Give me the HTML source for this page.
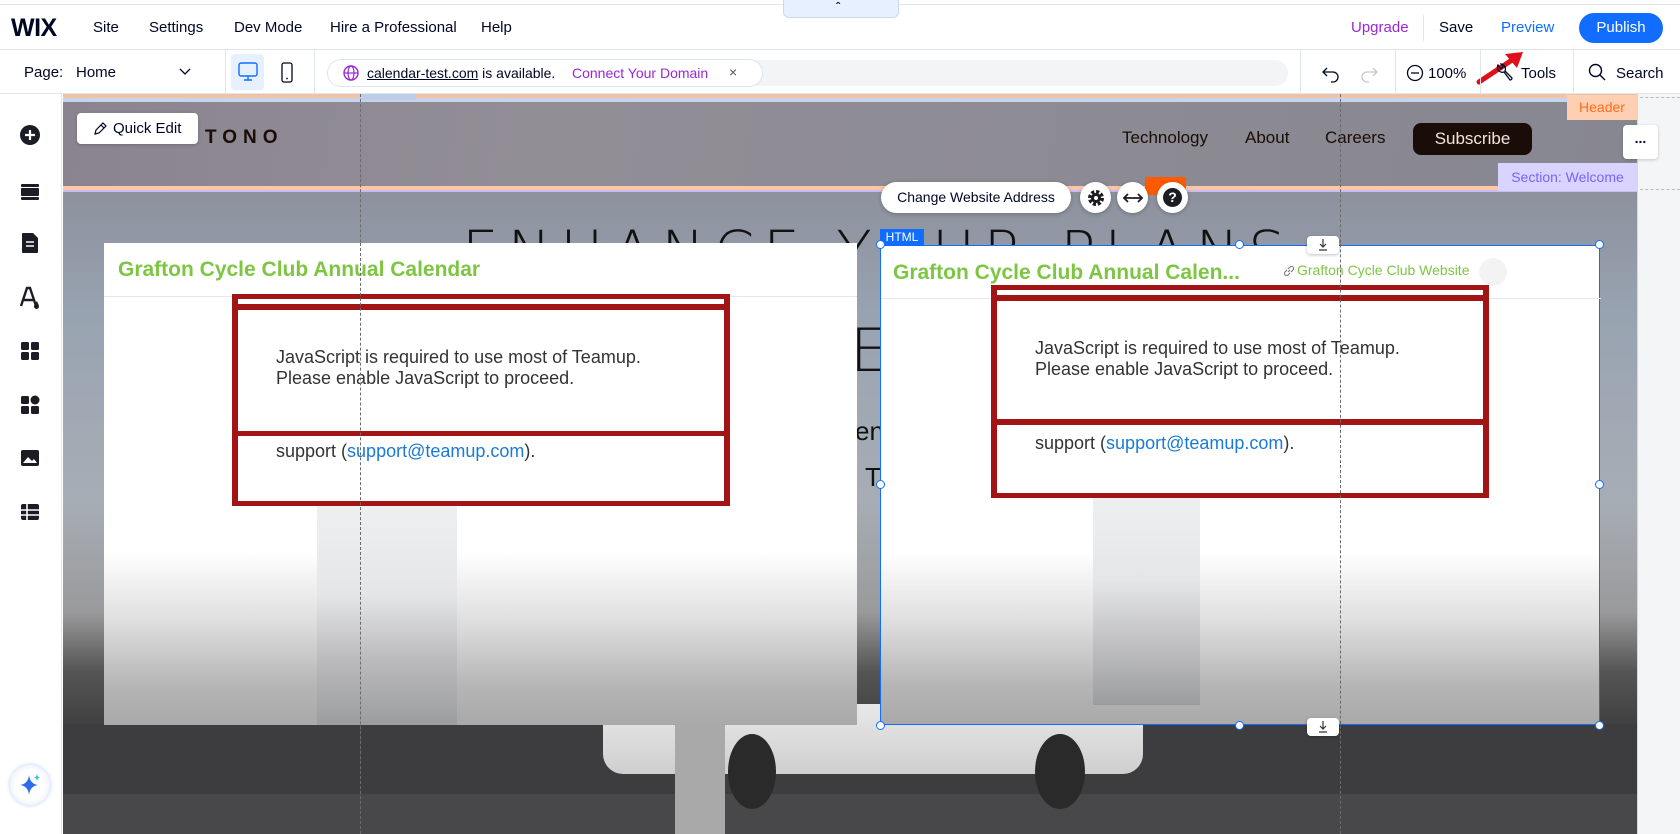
<!DOCTYPE html>
<html><head><meta charset="utf-8"><style>
*{box-sizing:border-box;margin:0;padding:0}
body{width:1680px;height:834px;overflow:hidden;font-family:"Liberation Sans",Arial,sans-serif;background:#fff;position:relative;color:#000624}
.a{position:absolute}
.t{position:absolute;white-space:nowrap}
.sep{position:absolute;width:1px;background:#dfe5eb}
.dash{position:absolute;width:0;border-left:1.5px dashed #6b6b6b}
.jt{font-family:"Liberation Sans",Arial,sans-serif;font-size:18px;color:#333;line-height:21px}
.rb{position:absolute;background:#a31515}
.hd{position:absolute;width:9px;height:9px;border:1.5px solid #116dff;background:#fff;border-radius:50%}
</style></head><body>
<!-- top bar -->
<div class="a" style="left:0;top:4px;width:1680px;height:1px;background:#dfe5eb"></div>
<div class="a" style="left:783px;top:0;width:116px;height:18px;background:#e7f0ff;border:1px solid #c9d8ee;border-top:none;border-radius:0 0 6px 6px"></div>
<div class="t" style="left:836px;top:0;font-size:12px;font-weight:bold">ˆ</div>
<div class="t" style="left:11px;top:14px;font-size:25px;font-weight:bold;letter-spacing:-0.5px">WIX</div>
<div class="t" style="left:93px;top:19px;font-size:15px">Site</div>
<div class="t" style="left:149px;top:19px;font-size:15px">Settings</div>
<div class="t" style="left:234px;top:19px;font-size:15px">Dev Mode</div>
<div class="t" style="left:330px;top:19px;font-size:15px">Hire a Professional</div>
<div class="t" style="left:481px;top:19px;font-size:15px">Help</div>
<div class="t" style="left:1351px;top:19px;font-size:15px;color:#9a27d5">Upgrade</div>
<div class="sep" style="left:1423px;top:15px;height:26px"></div>
<div class="t" style="left:1439px;top:19px;font-size:15px">Save</div>
<div class="t" style="left:1501px;top:19px;font-size:15px;color:#116dff">Preview</div>
<div class="a" style="left:1579px;top:13px;width:84px;height:30px;background:#116dff;border-radius:15px;color:#fff;font-size:15px;text-align:center;line-height:30px">Publish</div>
<div class="a" style="left:0;top:49px;width:1680px;height:1px;background:#dfe5eb"></div>
<!-- red arrow -->
<svg class="a" style="left:1475px;top:50px" width="60" height="36"><path d="M4 32 L40 8" stroke="#e0101a" stroke-width="5" stroke-linecap="round"/><path d="M30 4 L48 2 L42 18 Z" fill="#e0101a"/></svg>
<!-- second bar -->
<div class="t" style="left:24px;top:64px;font-size:15px">Page:</div>
<div class="t" style="left:76px;top:64px;font-size:15px">Home</div>
<svg class="a" style="left:179px;top:68px" width="12" height="8"><path d="M1 1l5 5 5-5" stroke="#000624" fill="none" stroke-width="1.3"/></svg>
<div class="sep" style="left:225px;top:50px;height:44px"></div>
<div class="a" style="left:231px;top:54px;width:33px;height:36px;background:#e7f0ff;border-radius:4px"></div>
<svg class="a" style="left:237px;top:62px" width="22" height="20"><rect x="2" y="1" width="18" height="13" rx="2" stroke="#116dff" fill="none" stroke-width="1.4"/><path d="M11 14v4M7 18h8" stroke="#116dff" stroke-width="1.4"/></svg>
<svg class="a" style="left:280px;top:62px" width="14" height="22"><rect x="2" y="1" width="10" height="19" rx="2" stroke="#000624" fill="none" stroke-width="1.3"/><circle cx="7" cy="16.5" r="0.9" fill="#000624"/></svg>
<div class="sep" style="left:314px;top:50px;height:44px"></div>
<div class="a" style="left:700px;top:60px;width:588px;height:26px;background:#f3f4f5;border-radius:13px"></div>
<div class="a" style="left:327px;top:59px;width:436px;height:28px;background:#fff;border:1px solid #dfe5eb;border-radius:14px"></div>
<svg class="a" style="left:342px;top:64px" width="18" height="18"><circle cx="9" cy="9" r="7" stroke="#9a27d5" fill="none" stroke-width="1.4"/><ellipse cx="9" cy="9" rx="3" ry="7" stroke="#9a27d5" fill="none" stroke-width="1.2"/><path d="M2 9h14" stroke="#9a27d5" stroke-width="1.2"/></svg>
<div class="t" style="left:367px;top:65px;font-size:14px"><span style="text-decoration:underline">calendar-test.com</span> is available.</div>
<div class="t" style="left:572px;top:65px;font-size:14px;color:#9a27d5">Connect Your Domain</div>
<div class="t" style="left:729px;top:64px;font-size:14px;color:#555">×</div>
<div class="sep" style="left:1300px;top:50px;height:44px"></div>
<svg class="a" style="left:1321px;top:62px" width="58" height="22"><path d="M6 6 L2 10 L6 14 M2 10 H12 a5 5 0 0 1 0 10 H10" stroke="#000624" fill="none" stroke-width="1.3"/><path d="M52 6 L56 10 L52 14 M56 10 H46 a5 5 0 0 0 0 10 H48" stroke="#c5c9cf" fill="none" stroke-width="1.3"/></svg>
<div class="sep" style="left:1395px;top:50px;height:44px"></div>
<svg class="a" style="left:1406px;top:64px" width="18" height="18"><circle cx="9" cy="9" r="7.5" stroke="#000624" fill="none" stroke-width="1.3"/><path d="M5 9h8" stroke="#000624" stroke-width="1.3"/></svg>
<div class="t" style="left:1428px;top:65px;font-size:15px">100%</div>
<div class="sep" style="left:1480px;top:50px;height:44px"></div>
<svg class="a" style="left:1494px;top:62px" width="20" height="22"><path d="M4 3 a5 5 0 0 0 6 7 L16 18 a2 2 0 0 0 2-2 L11 9 a5 5 0 0 0-4-7 L9 5 L7 7 Z" stroke="#000624" fill="none" stroke-width="1.3"/></svg>
<div class="t" style="left:1521px;top:65px;font-size:15px">Tools</div>
<div class="sep" style="left:1573px;top:50px;height:44px"></div>
<svg class="a" style="left:1588px;top:63px" width="18" height="18"><circle cx="7.5" cy="7.5" r="6" stroke="#000624" fill="none" stroke-width="1.4"/><path d="M12 12l5 5" stroke="#000624" stroke-width="1.4"/></svg>
<div class="t" style="left:1616px;top:65px;font-size:15px">Search</div>
<div class="a" style="left:0;top:93px;width:1680px;height:1px;background:#dfe5eb"></div>
<!-- left sidebar -->
<div class="a" style="left:0;top:94px;width:62px;height:740px;background:#fff;border-right:1px solid #dfe5eb"></div>
<svg class="a" style="left:18px;top:123px" width="24" height="420">
<circle cx="12" cy="12" r="10" fill="#1c1c24"/><path d="M12 7v10M7 12h10" stroke="#fff" stroke-width="2.2"/>
<rect x="3" y="61" width="18" height="3" rx="1" fill="#1c1c24"/><rect x="3" y="65" width="18" height="8" rx="1" fill="#1c1c24"/><rect x="3" y="74" width="18" height="3" rx="1" fill="#1c1c24"/>
<path d="M5 110h10l5 5v14a1 1 0 0 1-1 1H5a1 1 0 0 1-1-1V111a1 1 0 0 1 1-1z" fill="#1c1c24"/><path d="M8 119h8M8 123h8" stroke="#fff" stroke-width="1.6"/>
<path d="M3 183 L9 165 L12 165 L18 183 M6 177h9" stroke="#1c1c24" stroke-width="2.4" fill="none"/><path d="M19 178c-2 3-3 4-3 5.5a2.5 2.5 0 0 0 5 0c0-1.5-1-2.5-2-5.5z" fill="#1c1c24"/>
<rect x="3" y="219" width="8" height="8" rx="1.5" fill="#1c1c24"/><rect x="13" y="219" width="8" height="8" rx="1.5" fill="#1c1c24"/><rect x="3" y="229" width="8" height="8" rx="1.5" fill="#1c1c24"/><rect x="13" y="229" width="8" height="8" rx="1.5" fill="#1c1c24"/>
<rect x="3" y="273" width="8" height="8" rx="1.5" fill="#1c1c24"/><rect x="3" y="283" width="8" height="8" rx="1.5" fill="#1c1c24"/><rect x="13" y="283" width="8" height="8" rx="1.5" fill="#1c1c24"/><circle cx="17" cy="277" r="4.5" fill="#1c1c24"/>
<rect x="3" y="327" width="18" height="16" rx="2" fill="#1c1c24"/><path d="M5 340l5-6 4 4 2-2 3 4z" fill="#fff"/>
<rect x="3" y="381" width="18" height="16" rx="2" fill="#1c1c24"/><path d="M3 387h18M3 392h18M9 381v16" stroke="#fff" stroke-width="1.6"/>
</svg>
<div class="a" style="left:10px;top:765px;width:40px;height:40px;border-radius:50%;background:radial-gradient(circle,#fff 50%,#dfe6ff);box-shadow:0 0 4px #b8c8ff"></div>
<svg class="a" style="left:17px;top:772px" width="26" height="26"><path d="M12 3 Q13 12 21 13 Q13 14 12 23 Q11 14 3 13 Q11 12 12 3Z" fill="#2b6cf0"/><path d="M20 2 Q20.5 5 23 5.5 Q20.5 6 20 9 Q19.5 6 17 5.5 Q19.5 5 20 2Z" fill="#3bc1e0"/></svg>
<!-- right strip -->
<div class="a" style="left:1637px;top:94px;width:43px;height:740px;background:#f4f5f7;border-left:1px solid #cfd6e6"></div>
<div class="a" style="left:1640px;top:189px;width:40px;border-top:1px dashed #bbb"></div>
<div class="a" style="left:1640px;top:97px;width:40px;border-top:1px dashed #bbb"></div>
<!-- canvas -->
<div class="a" style="left:63px;top:94px;width:1574px;height:740px;background:linear-gradient(180deg,#878590 0%,#8e939f 15%,#98a3b1 30%,#a7adb5 55%,#9a9a9c 70%,#555 78%,#3e3e3e 86%,#3a3a3a 100%);overflow:hidden">
  <div class="a" style="left:0;top:630px;width:1574px;height:110px;background:#3d3d3f"></div>
  <div class="a" style="left:0;top:700px;width:1574px;height:40px;background:#48484a"></div>
  <!-- car -->
  <div class="a" style="left:540px;top:610px;width:540px;height:70px;background:linear-gradient(180deg,#e8e8e8,#cfcfcf);border-radius:10px 10px 20px 20px"></div>
  <div class="a" style="left:665px;top:640px;width:48px;height:75px;border-radius:50%;background:#2a2a2a"></div>
  <div class="a" style="left:972px;top:640px;width:50px;height:75px;border-radius:50%;background:#2a2a2a"></div>
  <div class="a" style="left:612px;top:630px;width:50px;height:110px;background:#a9a9a9"></div>
</div>
<!-- header section -->
<div class="a" style="left:63px;top:94px;width:1574px;height:4px;background:#f0c3a8"></div>
<div class="a" style="left:63px;top:98px;width:1574px;height:4px;background:#c9d3ea"></div>
<div class="a" style="left:360px;top:94px;width:56px;height:6px;background:#bccdea"></div>
<div class="a" style="left:63px;top:102px;width:1574px;height:84px;background:linear-gradient(100deg,#8a8490,#928e96 30%,#8d8b94 60%,#878791)"></div>
<div class="a" style="left:63px;top:186px;width:1574px;height:4px;background:#fec6a8"></div>
<div class="a" style="left:63px;top:190px;width:1574px;height:2px;background:#c7bdf2"></div>
<div class="t" style="left:205px;top:127px;font-size:19px;font-weight:bold;letter-spacing:6px;color:#1a0c06">TONO</div>
<div class="a" style="left:77px;top:113px;width:121px;height:31px;background:#fff;border-radius:4px;box-shadow:0 1px 3px rgba(0,0,0,.2)"></div>
<svg class="a" style="left:92px;top:121px" width="16" height="16"><path d="M3 13l1-4 7-7 3 3-7 7z M9 4l3 3" stroke="#000624" fill="none" stroke-width="1.2"/></svg>
<div class="t" style="left:113px;top:120px;font-size:15px">Quick Edit</div>
<div class="t" style="left:1122px;top:128px;font-size:17px;color:#1a0c06">Technology</div>
<div class="t" style="left:1245px;top:128px;font-size:17px;color:#1a0c06">About</div>
<div class="t" style="left:1325px;top:128px;font-size:17px;color:#1a0c06">Careers</div>
<div class="a" style="left:1413px;top:123px;width:119px;height:32px;background:#1a0c06;border-radius:8px;color:#f2e6dc;font-size:17px;text-align:center;line-height:32px">Subscribe</div>
<div class="a" style="left:1567px;top:95px;width:70px;height:25px;background:#ffcfb3;color:#ff6d1b;font-size:14px;text-align:center;line-height:25px">Header</div>
<div class="a" style="left:1623px;top:125px;width:35px;height:34px;background:#fff;border-radius:4px;box-shadow:0 1px 3px rgba(0,0,0,.2);text-align:center;font-weight:bold;font-size:14px;line-height:26px">...</div>
<div class="a" style="left:1498px;top:163px;width:139px;height:28px;background:#d9d3ff;color:#7b61ff;font-size:14px;text-align:center;line-height:28px">Section: Welcome</div>
<!-- big headline pieces -->
<div class="t" style="left:462px;top:218px;font-size:58px;letter-spacing:9px;color:#111;font-family:'DejaVu Sans',sans-serif;font-weight:200">ENHANCE YOUR PLANS</div>
<div class="t" style="left:850px;top:316px;font-size:60px;color:#111;font-family:'DejaVu Sans',sans-serif;font-weight:200">E</div>
<div class="t" style="left:855px;top:416px;font-size:26px;color:#111">en</div>
<div class="t" style="left:865px;top:462px;font-size:26px;color:#111">T</div>
<div class="dash" style="left:360px;top:94px;height:740px"></div>
<!-- left HTML box -->
<div class="a" style="left:104px;top:243px;width:753px;height:482px;background:linear-gradient(180deg,#fff 0%,#fff 64%,#e0e0e0 78%,#b5b5b5 92%,#a9a9a9 100%)">
  <div class="a" style="left:213px;top:263px;width:140px;height:219px;background:linear-gradient(180deg,#eeeff1 0%,#e5e6e8 40%,#bbbbbd 70%,#9c9d9f 100%)"></div>
  <div class="t" style="left:14px;top:15px;font-size:21px;font-weight:bold;color:#7dc642">Grafton Cycle Club Annual Calendar</div>
  <div class="a" style="left:0;top:53px;width:753px;height:1px;background:#e6e7ea"></div>
</div>
<div class="a" style="left:232px;top:294px;width:498px;height:212px;background:#fff"></div>
<div class="t jt" style="left:276px;top:347px">JavaScript is required to use most of Teamup.<br>Please enable JavaScript to proceed.</div>
<div class="t jt" style="left:276px;top:441px">support (<span style="color:#1a7ad6">support@teamup.com</span>).</div>
<div class="rb" style="left:232px;top:294px;width:498px;height:5px"></div>
<div class="rb" style="left:232px;top:304px;width:498px;height:6px"></div>
<div class="rb" style="left:232px;top:431px;width:498px;height:5px"></div>
<div class="rb" style="left:232px;top:501px;width:498px;height:5px"></div>
<div class="rb" style="left:232px;top:294px;width:6px;height:212px"></div>
<div class="rb" style="left:724px;top:294px;width:6px;height:212px"></div>
<div class="dash" style="left:360px;top:243px;height:591px"></div>
<!-- right HTML box -->
<div class="a" style="left:880px;top:245px;width:720px;height:480px;background:linear-gradient(180deg,#fff 0%,#fff 64%,#e0e0e0 78%,#b5b5b5 92%,#a9a9a9 100%);border:1px solid #116dff">
  <div class="a" style="left:212px;top:252px;width:107px;height:207px;background:linear-gradient(180deg,#eeeff1 0%,#e5e6e8 40%,#bbbbbd 75%,#9c9d9f 100%);border-bottom:1px solid #999"></div>
  <div class="t" style="left:12px;top:15px;font-size:21px;font-weight:bold;color:#7dc642">Grafton Cycle Club Annual Calen...</div>
  <svg class="a" style="left:402px;top:19px" width="12" height="12"><path d="M5 7l2-2M4 5L2 7a2 2 0 0 0 3 3l2-2M8 7l2-2a2 2 0 0 0-3-3L5 4" stroke="#777" fill="none" stroke-width="1.1"/></svg>
  <div class="t" style="left:416px;top:16px;font-size:14px;color:#7dc642">Grafton Cycle Club Website</div>
  <div class="a" style="left:598px;top:12px;width:28px;height:28px;border-radius:50%;background:#f3f3f3"></div>
  <div class="a" style="left:0;top:52px;width:720px;height:1px;background:#e6e7ea"></div>
</div>
<div class="a" style="left:991px;top:285px;width:498px;height:213px;background:#fff"></div>
<div class="t jt" style="left:1035px;top:338px">JavaScript is required to use most of Teamup.<br>Please enable JavaScript to proceed.</div>
<div class="t jt" style="left:1035px;top:433px">support (<span style="color:#1a7ad6">support@teamup.com</span>).</div>
<div class="rb" style="left:991px;top:285px;width:498px;height:5px"></div>
<div class="rb" style="left:991px;top:295px;width:498px;height:6px"></div>
<div class="rb" style="left:991px;top:419px;width:498px;height:6px"></div>
<div class="rb" style="left:991px;top:493px;width:498px;height:5px"></div>
<div class="rb" style="left:991px;top:285px;width:6px;height:213px"></div>
<div class="rb" style="left:1483px;top:285px;width:6px;height:213px"></div>
<div class="dash" style="left:1340px;top:94px;height:740px"></div>
<div class="a" style="left:880px;top:229px;width:44px;height:16px;background:#116dff;color:#fff;font-size:12px;text-align:center;line-height:16px">HTML</div>
<div class="hd" style="left:876px;top:240px"></div><div class="hd" style="left:1235px;top:240px"></div><div class="hd" style="left:1595px;top:240px"></div>
<div class="hd" style="left:876px;top:480px"></div><div class="hd" style="left:1595px;top:480px"></div>
<div class="hd" style="left:876px;top:721px"></div><div class="hd" style="left:1235px;top:721px"></div><div class="hd" style="left:1595px;top:721px"></div>
<div class="a" style="left:1307px;top:236px;width:32px;height:18px;background:#fff;border-radius:4px;box-shadow:0 1px 3px rgba(0,0,0,.25)"></div>
<svg class="a" style="left:1317px;top:238px" width="12" height="14"><path d="M6 1v8M3 6l3 3 3-3M2 12h8" stroke="#333" fill="none" stroke-width="1.2"/></svg>
<div class="a" style="left:1307px;top:718px;width:32px;height:18px;background:#fff;border-radius:4px;box-shadow:0 1px 3px rgba(0,0,0,.25)"></div>
<svg class="a" style="left:1317px;top:720px" width="12" height="14"><path d="M6 1v8M3 6l3 3 3-3M2 12h8" stroke="#333" fill="none" stroke-width="1.2"/></svg>
<!-- floating toolbar -->
<div class="a" style="left:1145px;top:177px;width:41px;height:18px;background:#ff5a00"></div>
<div class="a" style="left:881px;top:182px;width:190px;height:31px;background:#fff;border-radius:16px;box-shadow:0 1px 4px rgba(0,0,0,.25);font-size:14px;text-align:center;line-height:31px">Change Website Address</div>
<div class="a" style="left:1080px;top:182px;width:31px;height:31px;background:#fff;border-radius:50%;box-shadow:0 1px 4px rgba(0,0,0,.25)"></div>
<svg class="a" style="left:1086px;top:188px" width="20" height="20"><circle cx="10" cy="10" r="6" fill="none" stroke="#1c1c24" stroke-width="4" stroke-dasharray="3 1.7"/><circle cx="10" cy="10" r="5" fill="#1c1c24"/><circle cx="10" cy="10" r="2" fill="#fff"/></svg>
<div class="a" style="left:1117px;top:182px;width:31px;height:31px;background:#fff;border-radius:50%;box-shadow:0 1px 4px rgba(0,0,0,.25)"></div>
<svg class="a" style="left:1121px;top:189px" width="24" height="18"><path d="M3 9h18M7 5L3 9l4 4M17 5l4 4-4 4" stroke="#1c1c24" fill="none" stroke-width="1.8"/></svg>
<div class="a" style="left:1157px;top:182px;width:31px;height:31px;background:#fff;border-radius:50%;box-shadow:0 1px 4px rgba(0,0,0,.25)"></div>
<div class="a" style="left:1163px;top:188px;width:19px;height:19px;background:#1c1c24;border-radius:50%;color:#fff;font-weight:bold;font-size:14px;text-align:center;line-height:19px">?</div>
</body></html>
